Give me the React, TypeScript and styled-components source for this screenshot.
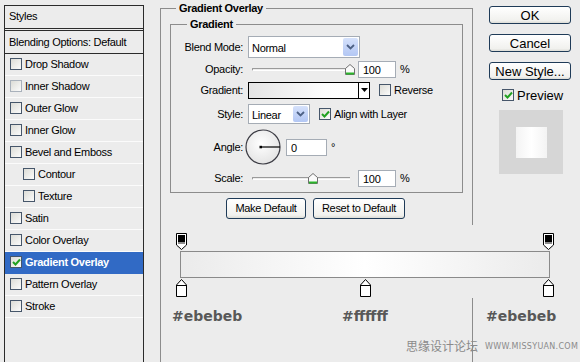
import React from 'react';
import styled, { createGlobalStyle } from 'styled-components';

const GlobalStyle = createGlobalStyle`
  html, body {
    margin: 0;
    width: 580px;
    height: 362px;
    overflow: hidden;
    background: #ececec;
    font-family: "Liberation Sans", Tahoma, Arial, sans-serif;
    font-size: 11px;
    letter-spacing: -0.3px;
    color: #000;
  }
`;

const Window = styled.div`
  position: relative;
  display: flex;
  align-items: flex-start;
  width: 580px;
  height: 362px;
  overflow: hidden;
`;

/* ---------- left styles list ---------- */

const Sidebar = styled.div`
  margin: 5px 0 0 4px;
  width: 140px;
  height: 400px;
  box-sizing: border-box;
  border: 1px solid #2b2b2b;
  flex-shrink: 0;
`;

const SidebarHeader = styled.div`
  height: 25px;
  box-sizing: border-box;
  padding: 0 0 2px 4px;
  display: flex;
  align-items: center;
  border-bottom: 3px double #2b2b2b;
`;

const BlendingRow = styled.div`
  height: 23px;
  box-sizing: border-box;
  padding: 0 0 1px 4px;
  display: flex;
  align-items: center;
  border-bottom: 1px solid #2b2b2b;
`;

const StyleRow = styled.div<{ $indent?: boolean; $selected?: boolean }>`
  height: 22px;
  box-sizing: border-box;
  display: flex;
  align-items: center;
  padding-left: ${p => (p.$indent ? 18 : 5)}px;
  padding-bottom: 2px;
  border-bottom: 1px solid ${p => (p.$selected ? '#316ac5' : '#fbfbfb')};
  background: ${p => (p.$selected ? '#316ac5' : 'transparent')};
  color: ${p => (p.$selected ? '#fff' : '#000')};
  font-weight: ${p => (p.$selected ? 'bold' : 'normal')};
`;

const Box = styled.span<{ $faded?: boolean }>`
  width: 12px;
  height: 12px;
  box-sizing: border-box;
  margin-right: 3px;
  flex-shrink: 0;
  border: 1px solid ${p => (p.$faded ? '#a9b1bb' : '#46566a')};
  background: linear-gradient(135deg, #dcdcd6, #fbfbfb);
  display: flex;
  align-items: center;
  justify-content: center;
`;

const Check = ({ on, faded }: { on?: boolean; faded?: boolean }) => (
  <Box $faded={faded}>
    {on && (
      <svg width="9" height="8" viewBox="0 0 9 8">
        <path d="M1 4 L3.5 6.5 L8 1.5" fill="none" stroke="#21a121" strokeWidth="2" />
      </svg>
    )}
  </Box>
);

const styleItems: { name: string; indent?: boolean; selected?: boolean; faded?: boolean }[] = [
  { name: 'Drop Shadow' },
  { name: 'Inner Shadow', faded: true },
  { name: 'Outer Glow' },
  { name: 'Inner Glow' },
  { name: 'Bevel and Emboss' },
  { name: 'Contour', indent: true },
  { name: 'Texture', indent: true },
  { name: 'Satin' },
  { name: 'Color Overlay' },
  { name: 'Gradient Overlay', selected: true },
  { name: 'Pattern Overlay' },
  { name: 'Stroke' },
];

/* ---------- main settings ---------- */

const Main = styled.div`
  margin: 2px 0 0 16px;
  width: 313px;
  flex-shrink: 0;
`;

const Group = styled.fieldset<{ $w: number; $h: number; $pad: string }>`
  margin: 0;
  box-sizing: border-box;
  width: ${p => p.$w}px;
  height: ${p => p.$h}px;
  padding: ${p => p.$pad};
  border: 1px solid #8c8c8c;
  min-inline-size: 0;
`;

const Legend = styled.legend<{ $offset: number }>`
  margin-left: ${p => p.$offset}px;
  padding: 0 3px;
  font-weight: bold;
  line-height: 13px;
`;

const FormRow = styled.div<{ $h: number; $mt?: number }>`
  display: flex;
  align-items: center;
  height: ${p => p.$h}px;
  margin-top: ${p => p.$mt ?? 0}px;
`;

const FieldLabel = styled.span`
  width: 72px;
  margin-right: 5px;
  text-align: right;
  flex-shrink: 0;
`;

const Select = styled.div<{ $w: number; $h: number }>`
  display: flex;
  width: ${p => p.$w}px;
  height: ${p => p.$h}px;
  box-sizing: border-box;
  border: 1px solid #a5acb5;
  background: #fff;
`;

const SelectValue = styled.span`
  flex: 1;
  display: flex;
  align-items: center;
  padding-left: 3px;
  padding-top: 2px;
`;

const SelectButton = styled.span`
  width: 15px;
  margin: 1px;
  background: linear-gradient(#d5e1fb, #b3c7f4);
  border-radius: 2px;
  display: flex;
  align-items: center;
  justify-content: center;
`;

const Chevron = () => (
  <svg width="9" height="6" viewBox="0 0 9 6">
    <path d="M1 1 L4.5 4.5 L8 1" fill="none" stroke="#4d6185" strokeWidth="1.8" />
  </svg>
);

const Slider = styled.div`
  position: relative;
  width: 98px;
  height: 12px;
  margin-left: 4px;
  margin-right: 8px;
`;

const Track = styled.div`
  position: absolute;
  left: 0;
  right: 0;
  top: 5px;
  height: 1px;
  border-top: 1px solid #9a9a9a;
  border-bottom: 1px solid #fff;
  border-left: 1px solid #9a9a9a;
  border-radius: 1px 0 0 1px;
`;

const Thumb = styled.svg`
  position: absolute;
  top: 1px;
`;

const SliderThumb = ({ at }: { at: number }) => (
  <Thumb width="10" height="11" viewBox="0 0 10 11" style={{ left: at }}>
    <path d="M0.5 4.5 L5 0.5 L9.5 4.5 V10.5 H0.5 Z" fill="#fafafa" stroke="#707070" />
    <rect x="1" y="8.5" width="8" height="2" fill="#2bb52b" />
  </Thumb>
);

const NumberInput = styled.input<{ $w: number }>`
  width: ${p => p.$w}px;
  height: 17px;
  box-sizing: border-box;
  border: 1px solid #a5acb5;
  padding: 1px 0 0 4px;
  margin: 0 4px 0 0;
  font: inherit;
  letter-spacing: inherit;
  background: #fff;
  outline: none;
`;

const GradientSwatch = styled.div`
  display: flex;
  width: 122px;
  height: 17px;
  box-sizing: border-box;
  border: 1px solid #000;
  margin-right: 9px;
`;

const SwatchFill = styled.div`
  flex: 1;
  background: linear-gradient(to right, #e4e4e4, #fdfdfd 70%, #fff);
`;

const SwatchArrow = styled.div`
  width: 10px;
  border-left: 1px solid #000;
  background: #fff;
  display: flex;
  align-items: center;
  justify-content: center;
`;

const Option = styled.label`
  display: flex;
  align-items: center;
  margin-left: 9px;
`;

const Dial = styled.svg`
  margin-left: -3px;
  margin-right: 5px;
`;

const ButtonRow = styled.div`
  display: flex;
  justify-content: center;
  gap: 7px;
  margin-top: 5px;
  padding-right: 2px;
`;

const PushButton = styled.button<{ $w: number; $h: number; $size?: number }>`
  width: ${p => p.$w}px;
  height: ${p => p.$h}px;
  padding: 0;
  box-sizing: border-box;
  border: 1px solid #1f3b58;
  border-radius: 3px;
  background: linear-gradient(#ffffff, #f1f1ee 85%, #dcdcd6);
  font-family: "Liberation Sans", Tahoma, Arial, sans-serif;
  font-size: ${p => p.$size ?? 11}px;
  letter-spacing: ${p => (p.$size ? 0 : -0.3)}px;
  color: #000;
  line-height: 1;
`;

/* ---------- right column ---------- */

const Actions = styled.div`
  margin: 6px 0 0 16px;
  width: 82px;
  display: flex;
  flex-direction: column;
  gap: 10px;
`;

const PreviewToggle = styled.label`
  display: flex;
  align-items: center;
  margin: -1px 0 0 13px;
  font-size: 13px;
  letter-spacing: 0;
  height: 12px;
`;

const PreviewBox = styled.div`
  margin: -1px 0 0 10px;
  width: 64px;
  height: 64px;
  background: #d6d6d6;
  display: flex;
  align-items: center;
  justify-content: center;
`;

const PreviewSwatch = styled.div`
  width: 31px;
  height: 31px;
  background: linear-gradient(to right, #f3f3f3, #fff 50%, #f3f3f3);
`;

/* ---------- gradient editor overlay ---------- */

const Editor = styled.div`
  position: absolute;
  left: 165px;
  top: 225px;
  width: 415px;
  height: 73px;
  box-sizing: border-box;
  padding: 8px 0 0 15px;
  background: #ececec;
`;

const StopLane = styled.div`
  position: relative;
  width: 370px;
  height: 18px;
`;

const Stop = styled.svg`
  position: absolute;
  top: 0;
`;

const Bar = styled.div`
  width: 370px;
  height: 27px;
  box-sizing: border-box;
  border: 1px solid #8a8a8a;
  background: linear-gradient(to right, #ebebeb, #ffffff 50%, #ebebeb);
`;

const OpacityStop = ({ at }: { at: number }) => (
  <Stop width="11" height="17" viewBox="0 0 11 17" style={{ left: at }}>
    <path d="M0.5 0.5 H10.5 V12 L5.5 16.5 L0.5 12 Z" fill="#fff" stroke="#000" />
    <rect x="2" y="2" width="7" height="7" fill="#000" />
    <rect x="2" y="9" width="7" height="2" fill="#8c8c8c" />
  </Stop>
);

const ColorStop = ({ at }: { at: number }) => (
  <Stop width="11" height="18" viewBox="0 0 11 18" style={{ left: at, top: 1 }}>
    <path d="M5.5 0.5 L10.5 6 V17.5 H0.5 V6 Z" fill="#fff" stroke="#000" />
    <line x1="0.5" y1="6.5" x2="10.5" y2="6.5" stroke="#000" />
  </Stop>
);

const HexLabel = styled.span`
  position: absolute;
  top: 307px;
  font-family: "DejaVu Sans", Verdana, sans-serif;
  font-weight: bold;
  font-size: 14px;
  letter-spacing: 0;
  line-height: 18px;
  color: #585858;
`;

const Watermark = styled.div`
  position: absolute;
  left: 406px;
  top: 338px;
  display: flex;
  align-items: center;
  gap: 7px;
  color: #8a8a8a;
  letter-spacing: 0;
`;

const WatermarkCn = styled.span`
  font-family: "Noto Sans CJK SC", sans-serif;
  font-size: 12px;
  line-height: 16px;
`;

const WatermarkUrl = styled.span`
  font-family: "DejaVu Sans", sans-serif;
  font-size: 8px;
  letter-spacing: 0.3px;
`;

export default function App() {
  return (
    <>
      <GlobalStyle />
      <Window>
        <Sidebar>
          <SidebarHeader>Styles</SidebarHeader>
          <BlendingRow>Blending Options: Default</BlendingRow>
          {styleItems.map(item => (
            <StyleRow key={item.name} $indent={item.indent} $selected={item.selected}>
              <Check on={item.selected} faded={item.faded} />
              {item.name}
            </StyleRow>
          ))}
        </Sidebar>

        <Main>
          <Group $w={313} $h={400} $pad="3px 9px 0">
            <Legend $offset={6}>Gradient Overlay</Legend>
            <Group $w={293} $h={175} $pad="5px 0 0">
              <Legend $offset={16}>Gradient</Legend>

              <FormRow $h={22}>
                <FieldLabel>Blend Mode:</FieldLabel>
                <Select $w={112} $h={22}>
                  <SelectValue>Normal</SelectValue>
                  <SelectButton><Chevron /></SelectButton>
                </Select>
              </FormRow>

              <FormRow $h={22}>
                <FieldLabel>Opacity:</FieldLabel>
                <Slider>
                  <Track />
                  <SliderThumb at={93} />
                </Slider>
                <NumberInput $w={38} value="100" readOnly />
                %
              </FormRow>

              <FormRow $h={20}>
                <FieldLabel>Gradient:</FieldLabel>
                <GradientSwatch>
                  <SwatchFill />
                  <SwatchArrow>
                    <svg width="7" height="4" viewBox="0 0 7 4">
                      <path d="M0 0 H7 L3.5 4 Z" fill="#000" />
                    </svg>
                  </SwatchArrow>
                </GradientSwatch>
                <Check />
                Reverse
              </FormRow>

              <FormRow $h={20} $mt={4}>
                <FieldLabel>Style:</FieldLabel>
                <Select $w={62} $h={20}>
                  <SelectValue>Linear</SelectValue>
                  <SelectButton><Chevron /></SelectButton>
                </Select>
                <Option>
                  <Check on />
                  Align with Layer
                </Option>
              </FormRow>

              <FormRow $h={34} $mt={6}>
                <FieldLabel>Angle:</FieldLabel>
                <Dial width="36" height="36" viewBox="0 0 36 36">
                  <defs>
                    <radialGradient id="dialFill" cx="45%" cy="40%" r="60%">
                      <stop offset="0%" stopColor="#ffffff" />
                      <stop offset="100%" stopColor="#e4e4e4" />
                    </radialGradient>
                  </defs>
                  <circle cx="18" cy="18" r="17" fill="url(#dialFill)" stroke="#3c3c44" strokeWidth="1.2" />
                  <rect x="14.5" y="16.8" width="2.5" height="2.5" fill="#000" />
                  <line x1="16" y1="18" x2="35" y2="18" stroke="#000" strokeWidth="1.2" />
                </Dial>
                <NumberInput $w={41} value="0" readOnly />
                °
              </FormRow>

              <FormRow $h={18} $mt={5}>
                <FieldLabel>Scale:</FieldLabel>
                <Slider>
                  <Track />
                  <SliderThumb at={56} />
                </Slider>
                <NumberInput $w={38} value="100" readOnly />
                %
              </FormRow>
            </Group>

            <ButtonRow>
              <PushButton $w={80} $h={21}>Make Default</PushButton>
              <PushButton $w={92} $h={21}>Reset to Default</PushButton>
            </ButtonRow>
          </Group>
        </Main>

        <Actions>
          <PushButton $w={82} $h={18} $size={13}>OK</PushButton>
          <PushButton $w={82} $h={18} $size={13}>Cancel</PushButton>
          <PushButton $w={82} $h={18} $size={13}>New Style...</PushButton>
          <PreviewToggle>
            <Check on />
            Preview
          </PreviewToggle>
          <PreviewBox>
            <PreviewSwatch />
          </PreviewBox>
        </Actions>

        <Editor>
          <StopLane>
            <OpacityStop at={-4} />
            <OpacityStop at={363} />
          </StopLane>
          <Bar />
          <StopLane>
            <ColorStop at={-4} />
            <ColorStop at={180} />
            <ColorStop at={363} />
          </StopLane>
        </Editor>

        <HexLabel style={{ left: 172 }}>#ebebeb</HexLabel>
        <HexLabel style={{ left: 342 }}>#ffffff</HexLabel>
        <HexLabel style={{ left: 486 }}>#ebebeb</HexLabel>

        <Watermark>
          <WatermarkCn>思缘设计论坛</WatermarkCn>
          <WatermarkUrl>WWW.MISSYUAN.COM</WatermarkUrl>
        </Watermark>
      </Window>
    </>
  );
}
